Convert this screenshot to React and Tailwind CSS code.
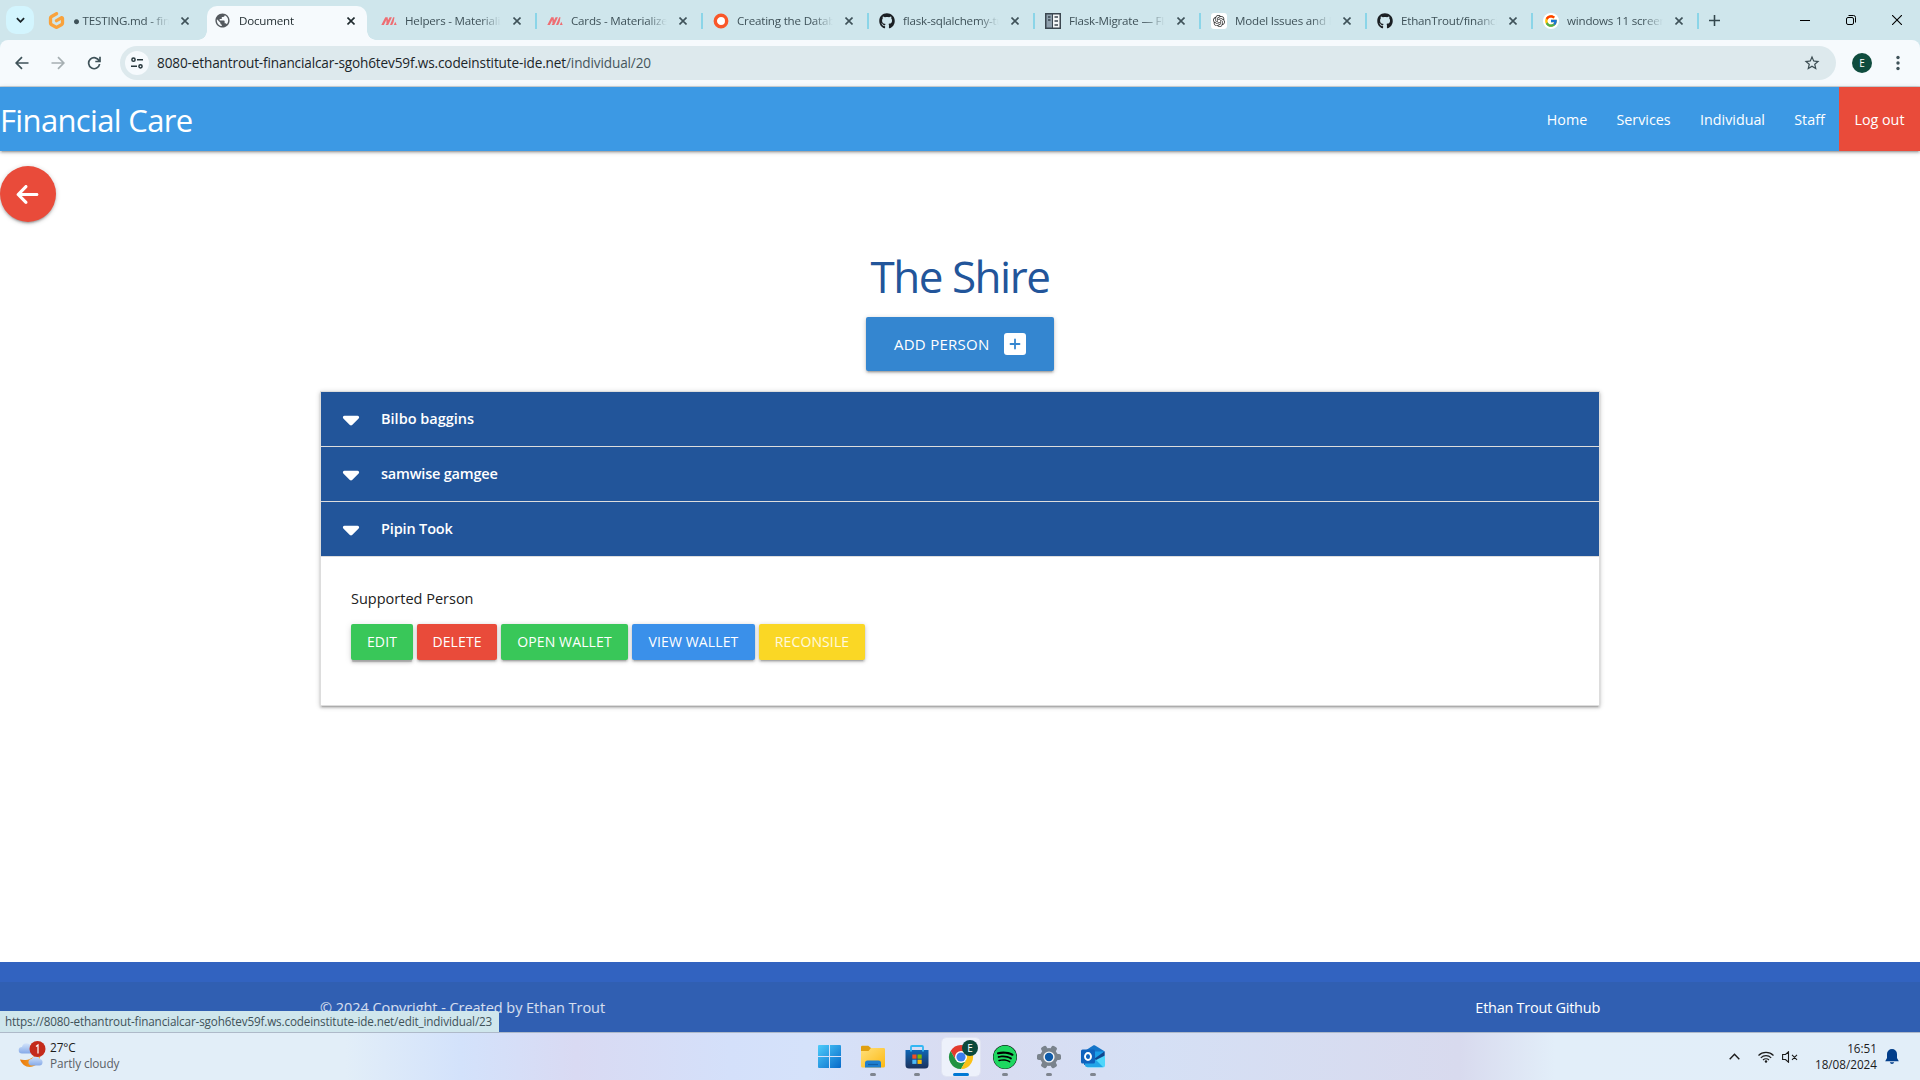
import React from "react";
import { FaGithub, FaSpotify } from "react-icons/fa";
import { FaArrowLeft, FaCaretDown } from "react-icons/fa6";
import { SiGitpod, SiOpenai } from "react-icons/si";
import { FcGoogle } from "react-icons/fc";
import { MdPublic, MdStarBorder } from "react-icons/md";

const SHADOW = "shadow-[0_2px_2px_0_rgba(0,0,0,0.14),0_3px_1px_-2px_rgba(0,0,0,0.12),0_1px_5px_0_rgba(0,0,0,0.2)]";

function MaterializeIcon() {
  return (
    <svg viewBox="0 0 16 16" className="size-4" fill="#ee6e73">
      <path d="M.3 12 4.300 4.200h2.300L2.900 12zM4.600 12l4-7.800h2.300L7.200 12zM5.300 4.200h1.300L7.200 8.500 5.500 12zM9 12l3.200-7.800h1.300L12.600 9 11.200 12zM12.800 12l1.500-3.200 1.400 3.200z" />
    </svg>
  );
}

function RingIcon() {
  return (
    <svg viewBox="0 0 16 16" className="size-4">
      <circle cx="8" cy="8" r="5.700" fill="#fff" stroke="#f9572a" strokeWidth="3.400" />
    </svg>
  );
}

function DocsIcon() {
  return (
    <svg viewBox="0 0 16 16" className="size-4">
      <path d="M0 0h16v16H0z" fill="#3b4750" />
      <path d="M1.500 1.500h5.500v13H1.500z" fill="#8fa0ad" />
      <path d="M8 1.500h6.500v13H8z" fill="#f4f6f7" />
      <path d="M3 4h2.500M3 7h2.500M9.500 4H13M9.500 8H13M9.500 12H13" stroke="#3b4750" strokeWidth="1.600" />
    </svg>
  );
}

const tabs = [
  { title: "● TESTING.md - fin", icon: <SiGitpod className="size-[17px] text-[#f9a23c]" /> },
  { title: "Document", icon: <MdPublic className="size-[17px] text-[#54595e]" />, active: true },
  { title: "Helpers - Materialize", icon: <MaterializeIcon />, line: true },
  { title: "Cards - Materialize", icon: <MaterializeIcon />, line: true },
  { title: "Creating the Database", icon: <RingIcon />, line: true },
  { title: "flask-sqlalchemy-tu", icon: <FaGithub className="size-4 text-[#1b1f23]" />, line: true },
  { title: "Flask-Migrate — Fla", icon: <DocsIcon />, line: true },
  { title: "Model Issues and Fix", icon: <span className="grid size-4 place-items-center rounded-[3px] bg-white"><SiOpenai className="size-3 text-[#333]" /></span>, line: true },
  { title: "EthanTrout/financial", icon: <FaGithub className="size-4 text-[#1b1f23]" />, line: true },
  { title: "windows 11 screens", icon: <span className="grid size-4 place-items-center rounded-full bg-white"><FcGoogle className="size-[14px]" /></span>, line: true },
];

function Tab({ title, icon, active, line }) {
  return (
    <div className={"relative flex h-[34px] w-[166px] shrink-0 items-center " + (active ? "text-[#1f2a2e]" : "text-[#3f5259]")}>
      {active && (
        <div className="absolute inset-y-0 left-[-8px] flex w-[178px] items-end">
          <span className="h-[9px] w-[9px] bg-[radial-gradient(circle_at_0_0,transparent_8.500px,#f6fafd_9px)]" />
          <span className="h-full grow rounded-t-[10px] bg-[#f6fafd]" />
          <span className="h-[9px] w-[9px] bg-[radial-gradient(circle_at_100%_0,transparent_8.500px,#f6fafd_9px)]" />
        </div>
      )}
      <div className="relative flex grow items-center pb-[5px]">
        <span className="ml-[8px] grid size-[17px] place-items-center">{icon}</span>
        <span className="ml-[8px] w-[96px] overflow-hidden whitespace-nowrap text-[11.600px] leading-4 tracking-[-0.200px] [mask-image:linear-gradient(to_right,#000_76px,transparent_96px)]">
          {title}
        </span>
        <svg viewBox="0 0 8 8" className="ml-[12px] size-2" stroke={active ? "#1f2a2e" : "#3f5259"} strokeWidth="1.600">
          <path d="M.5.5l7 7M7.500.5l-7 7" />
        </svg>
      </div>
      {line && <span className="mr-px mb-[5px] h-4 w-[2px] bg-[#8bd5e8]" />}
    </div>
  );
}

function TabStrip() {
  return (
    <div className="flex h-10 bg-[#cfe6ec] pt-[6px]">
      <div className="ml-[6px] grid size-7 shrink-0 place-items-center rounded-[10px] bg-[#d3f5fe]">
        <svg viewBox="0 0 10 6" className="h-[6px] w-[9px]" fill="none" stroke="#1b2529" strokeWidth="2"><path d="M1 1l4 4 4-4" /></svg>
      </div>
      <div className="ml-[6px] flex">{tabs.map((t) => <Tab key={t.title} {...t} />)}</div>
      <svg viewBox="0 0 12 12" className="mt-[9px] ml-[9px] size-[11px]" stroke="#33474d" strokeWidth="1.700"><path d="M6 0v12M0 6h12" /></svg>
      <div className="ml-auto flex h-7 items-center text-black">
        <svg viewBox="0 0 10 10" className="mr-9 size-[10px]" stroke="currentColor"><path d="M0 5.500h10" /></svg>
        <svg viewBox="0 0 10 10" className="mr-9 size-[10px]" fill="none" stroke="currentColor"><rect x=".5" y="2.500" width="7" height="7" rx="1.500" /><path d="M2.500.5H7.500a2 2 0 0 1 2 2V7.500" /></svg>
        <svg viewBox="0 0 10 10" className="mr-[18px] size-[10px]" fill="none" stroke="currentColor" strokeWidth="1.100"><path d="M0 0l10 10M10 0L0 10" /></svg>
      </div>
    </div>
  );
}

function Toolbar() {
  return (
    <div className="bg-[#cfe6ec]">
      <div className="flex h-[47px] items-center rounded-t-[8px] border-b border-[#cdd5d9] bg-[#f6fafd]">
        <svg viewBox="0 0 14 14" className="ml-[15px] size-[14px]" fill="none" stroke="#3f5259" strokeWidth="1.700"><path d="M13.500 7H1.500M7 1.200L1.200 7 7 12.800" /></svg>
        <svg viewBox="0 0 14 14" className="ml-[22px] size-[14px]" fill="none" stroke="#a6afb2" strokeWidth="1.700"><path d="M.5 7h12M7 1.200L12.800 7 7 12.800" /></svg>
        <svg viewBox="0 0 14 14" className="ml-[22px] size-[14px]" fill="none" stroke="#3f5259" strokeWidth="1.700"><path d="M12.200 5A5.500 5.500 0 1 0 12.600 8M13 .8v4.700H8.300" /></svg>
        <div className="ml-[19px] flex h-[34px] w-[1716px] items-center rounded-full bg-[#dde9ed]">
          <span className="ml-[5px] grid size-6 place-items-center rounded-full bg-[#f6fafd]">
            <svg viewBox="0 0 12 12" className="size-3" fill="none" stroke="#26363b" strokeWidth="1.500"><circle cx="2.500" cy="2.700" r="1.600" /><path d="M6 2.700h6M0 9.300h6" /><circle cx="9.500" cy="9.300" r="1.600" /></svg>
          </span>
          <span className="ml-2 text-[13.600px] leading-5 tracking-[-0.140px] text-[#1b2529]">
            8080-ethantrout-financialcar-sgoh6tev59f.ws.codeinstitute-ide.net<span className="text-[#46565c]">/individual/20</span>
          </span>
          <MdStarBorder className="mr-[15px] ml-auto size-[18px] text-[#3a4b51]" />
        </div>
        <span className="ml-4 grid size-5 place-items-center rounded-full bg-[#0f4c3e] text-[10px] leading-none text-white">E</span>
        <svg viewBox="0 0 4 16" className="ml-6 h-4 w-1" fill="#3f5259"><circle cx="2" cy="2.500" r="1.700" /><circle cx="2" cy="8" r="1.700" /><circle cx="2" cy="13.500" r="1.700" /></svg>
      </div>
    </div>
  );
}

const links = [
  ["Home", "w-[70px]"],
  ["Services", "w-[83px]"],
  ["Individual", "w-[95px]"],
  ["Staff", "w-[59px]"],
  ["Log out", "w-[81px] bg-[#e94b3a]"],
];

function Navbar() {
  return (
    <nav className={"relative flex h-16 items-center justify-between bg-[#3c99e4] text-white " + SHADOW}>
      <span className="pt-[3px] text-[31px] tracking-[-0.650px]">Financial Care</span>
      <div className="flex h-full">
        {links.map(([name, cls]) => (
          <a key={name} className={"grid h-full place-items-center pt-px text-[14.300px] " + cls}>{name}</a>
        ))}
      </div>
    </nav>
  );
}

const people = [
  ["Bilbo baggins", "tracking-normal"],
  ["samwise gamgee", "tracking-[-0.200px]"],
  ["Pipin Took", "tracking-[-0.150px]"],
];

const actions = [
  ["Edit", "w-[62px] bg-[#39c759] shadow-[0_3px_3px_0_rgba(0,0,0,0.14),0_1px_7px_0_rgba(0,0,0,0.12),0_3px_1px_-1px_rgba(0,0,0,0.2)]"],
  ["Delete", "w-[80px] bg-[#e94b3a] " + SHADOW],
  ["Open Wallet", "w-[127px] bg-[#39c759] " + SHADOW],
  ["View Wallet", "w-[123px] bg-[#3a90ea] " + SHADOW],
  ["Reconsile", "w-[106px] bg-[#fad725] text-white/85 " + SHADOW],
];

function Main() {
  return (
    <main className="flex h-[811px] flex-col items-center bg-white">
      <a className={"mt-[15px] flex size-14 items-center self-start rounded-full bg-[#e94b3a] pl-[15px] text-white " + SHADOW}>
        <FaArrowLeft className="size-[25px]" />
      </a>
      <h1 className="mt-6 h-[71px] text-[44px] leading-[60px] tracking-[-1.500px] text-[#22559a]">The Shire</h1>
      <a className={"flex h-[54px] w-[188px] items-center rounded-[2px] bg-[#3486d0] pl-7 text-white " + SHADOW}>
        <span className="text-[15px] tracking-[0.250px] uppercase">Add Person</span>
        <svg viewBox="0 0 22 22" className="ml-[15px] size-[22px]">
          <rect width="22" height="22" rx="3" fill="#fff" />
          <path d="M11 6.500v9M6.500 11h9" stroke="#3486d0" strokeWidth="1.800" strokeLinecap="round" />
        </svg>
      </a>
      <div className={"mt-5 h-[315px] w-[1280px] border border-[#ddd] " + SHADOW}>
        {people.map(([name, cls]) => (
          <div key={name} className="flex h-[55px] items-center border-b border-[#ddd] bg-[#22559a] text-white">
            <FaCaretDown className="ml-[17px] size-[26px]" />
            <span className={"ml-[17px] pb-px text-[14.500px] font-semibold " + cls}>{name}</span>
          </div>
        ))}
        <div className="px-[30px] pt-[30px] text-[#212121]">
          <p className="text-[14.500px] leading-[23px]">Supported Person</p>
          <div className="mt-[14px] flex gap-1">
            {actions.map(([name, cls]) => (
              <a key={name} className={"grid h-9 place-items-center rounded-[2px] pb-px text-[14px] tracking-[0.120px] text-white uppercase " + cls}>{name}</a>
            ))}
          </div>
        </div>
      </div>
    </main>
  );
}

function Footer() {
  return (
    <footer className="relative h-[70px] bg-[#3263c0] pt-5">
      <div className="flex h-[50px] items-center justify-center bg-[#305fb2]">
        <div className="flex w-[1280px] justify-between pt-px text-[14.500px]">
          <span className="tracking-[-0.050px] text-white/80">© 2024 Copyright - Created by Ethan Trout</span>
          <a className="tracking-[-0.260px] text-white">Ethan Trout Github</a>
        </div>
      </div>
      <div className="absolute bottom-0 left-0 flex h-[21px] w-[499px] items-center rounded-tr-[2px] bg-[#cfe6ec] pl-[5px] text-[11.700px] tracking-[-0.140px] whitespace-nowrap text-[#3f5259]">
        https://8080-ethantrout-financialcar-sgoh6tev59f.ws.codeinstitute-ide.net/edit_individual/23
      </div>
    </footer>
  );
}

function Weather() {
  return (
    <svg viewBox="0 0 28 30" className="h-[30px] w-7">
      <defs>
        <linearGradient id="cloud" x1="0" y1="0" x2="0" y2="1"><stop offset="0" stopColor="#d3e4fb" /><stop offset="1" stopColor="#86aae8" /></linearGradient>
        <linearGradient id="moon" x1="0" y1="0" x2="1" y2="0"><stop offset="0" stopColor="#e8780c" /><stop offset="1" stopColor="#fbb034" /></linearGradient>
      </defs>
      <path d="M4 14.500a3.300 3.300 0 0 1 0-6.600 4.800 4.800 0 0 1 9-1v7.600z" fill="url(#cloud)" />
      <path d="M2 20.500c6 1.500 13-.5 15-5h5c1 7-4 12.500-10.500 12.500-4 0-8-3-9.500-7.500z" fill="url(#moon)" />
      <path d="M13 26.500a3.300 3.300 0 0 1 .5-6.500 4.700 4.700 0 0 1 8.500 0 3.300 3.300 0 0 1-.5 6.500z" fill="url(#cloud)" />
      <circle cx="19.500" cy="10" r="8" fill="#c42b1c" />
      <path d="M18 7.500l2-1.500v8.500" fill="none" stroke="#fff" strokeWidth="1.200" />
    </svg>
  );
}

function WindowsIcon() {
  return (
    <svg viewBox="0 0 23 23" className="size-[23px]">
      <defs><linearGradient id="win" x1="0" y1="0" x2="1" y2="1"><stop offset="0" stopColor="#4dccfb" /><stop offset="1" stopColor="#0669c9" /></linearGradient></defs>
      <path d="M0 1a1 1 0 0 1 1-1h10v11H0zM12 0h10a1 1 0 0 1 1 1v10H12zM0 12h11v11H1a1 1 0 0 1-1-1zM12 12h11v10a1 1 0 0 1-1 1H12z" fill="url(#win)" />
    </svg>
  );
}

function FolderIcon() {
  return (
    <svg viewBox="0 0 24 24" className="size-6">
      <defs><linearGradient id="fold" x1="0" y1="0" x2="1" y2="1"><stop offset="0" stopColor="#ffe07a" /><stop offset="1" stopColor="#fdb913" /></linearGradient></defs>
      <path d="M0 2a1.300 1.300 0 0 1 1.300-1.300h6L10 3v5H0z" fill="#e09f10" />
      <path d="M0 6h7.500L10 3h12.700A1.300 1.300 0 0 1 24 4.300V21a1.500 1.500 0 0 1-1.500 1.500h-21A1.500 1.500 0 0 1 0 21z" fill="url(#fold)" />
      <path d="M4 22.500V18a2.500 2.500 0 0 1 2.500-2.500h11A2.500 2.500 0 0 1 20 18v4.500z" fill="#1f7fcf" />
      <path d="M7 19.500h10" stroke="#135fa5" strokeWidth="1.200" />
    </svg>
  );
}

function StoreIcon() {
  return (
    <svg viewBox="0 0 24 24" className="size-6">
      <defs><linearGradient id="store" x1="0" y1="0" x2="0" y2="1"><stop offset="0" stopColor="#0f66b5" /><stop offset="1" stopColor="#1b315c" /></linearGradient></defs>
      <path d="M.5 5h23v15a3.500 3.500 0 0 1-3.500 3.500H4A3.500 3.500 0 0 1 .5 20z" fill="url(#store)" />
      <path d="M6 6.500V2a1 1 0 0 1 1-1h10a1 1 0 0 1 1 1v4.500" fill="none" stroke="#33b7f3" strokeWidth="1.800" />
      <path d="M7.300 9.500h4.200v4.200H7.300z" fill="#f25022" /><path d="M12.500 9.500h4.200v4.200h-4.200z" fill="#7fba00" />
      <path d="M7.300 14.700h4.200v4.200H7.300z" fill="#4cb8f5" /><path d="M12.500 14.700h4.200v4.200h-4.200z" fill="#ffb900" />
    </svg>
  );
}

function ChromeIcon() {
  return (
    <svg viewBox="0 0 38 34" className="h-[34px] w-[38px]">
      <path d="M8.600 13A12 12 0 0 1 29.400 13H19L13.800 22z" fill="#e33b2e" />
      <path d="M8.600 13A12 12 0 0 0 19 31L24.200 22H13.800z" fill="#229342" />
      <path d="M29.400 13A12 12 0 0 1 19 31L24.200 22 19 13z" fill="#fbc116" />
      <circle cx="19" cy="19" r="6" fill="#fff" /><circle cx="19" cy="19" r="4.600" fill="#3b7ded" />
      <circle cx="28" cy="10" r="8" fill="#0b4a3c" />
      <text x="28" y="13.500" textAnchor="middle" fontSize="10" fill="#fff">E</text>
    </svg>
  );
}

function GearIcon() {
  return (
    <svg viewBox="0 0 24 24" className="size-6">
      <g fill="#7a838c">
        <circle cx="12" cy="12" r="9" />
        {["rotate(0 12 12)", "rotate(60 12 12)", "rotate(120 12 12)"].map((r) => (
          <rect key={r} x="0" y="9" width="24" height="6" rx="1.800" transform={r} />
        ))}
      </g>
      <circle cx="12" cy="12" r="5.600" fill="#f3f5f8" /><circle cx="12" cy="12" r="4.200" fill="#0f5ba8" />
    </svg>
  );
}

function OutlookIcon() {
  return (
    <svg viewBox="0 0 24 24" className="size-6">
      <path d="M3 6.500L12.500.3a1.200 1.200 0 0 1 1.200 0L23.500 6.200V20H3z" fill="#1475c9" />
      <path d="M10 6.500h13.500L14 13z" fill="#1a9de8" />
      <path d="M12 15l11.500-8.500v5L14 17z" fill="#12468c" />
      <path d="M4 20.500L24 10.500V20a2.500 2.500 0 0 1-2.500 2.500H6.500z" fill="#4fd6fb" />
      <path d="M4 14h10l8 8H6a2 2 0 0 1-2-2z" fill="#23a5e8" />
      <rect x="0" y="4.500" width="14" height="14" rx="1.500" fill="#0f62bd" />
      <ellipse cx="7" cy="11.500" rx="3" ry="3.500" fill="none" stroke="#fff" strokeWidth="1.900" />
    </svg>
  );
}

const apps = [
  { id: "start", icon: <WindowsIcon /> },
  { id: "files", icon: <FolderIcon />, open: true },
  { id: "store", icon: <StoreIcon />, open: true },
  { id: "chrome", icon: <ChromeIcon />, current: true },
  { id: "spotify", icon: <FaSpotify className="size-6 rounded-full bg-black text-[#1ed760]" />, open: true },
  { id: "settings", icon: <GearIcon />, open: true },
  { id: "outlook", icon: <OutlookIcon />, open: true },
];

function Taskbar() {
  return (
    <div className="flex h-12 items-start justify-between border-t border-[#aeb9c9] bg-[linear-gradient(to_right,#e2eef8_0%,#e2eef8_18%,#d3e2fb_24%,#d9daf3_30%,#d4e0fa_38%,#d5e2fa_42%,#d9dcf1_50%,#d5e0f5_60%,#d8daee_76%,#e2eef9_81%,#e2eef8_100%)]">
      <div className="flex w-[400px] pt-[6px] pl-[18px]">
        <Weather />
        <div className="ml-[4px] text-[11.800px] leading-4 tracking-[-0.100px] text-[#1b1b1b]">
          <p>27°C</p>
          <p className="text-[#5a5f66]">Partly cloudy</p>
        </div>
      </div>
      <div className="mt-[5px] ml-[2px] flex gap-[6px]">
        {apps.map((a) => (
          <div key={a.id} className={"flex h-[38px] w-[38px] flex-col items-center justify-between rounded " + (a.current ? "bg-[#edf1fb] outline outline-[#e0e4f2]" : "pt-[7px]")}>
            {a.icon}
            {a.open && <span className="h-[3px] w-[6px] rounded-full bg-[#7f858f]" />}
            {a.current && <span className="h-[3px] w-4 rounded-full bg-[#0078d4]" />}
          </div>
        ))}
      </div>
      <div className="flex h-full w-[400px] items-center justify-end pr-[21px] text-[#1b1b1b]">
        <svg viewBox="0 0 11 7" className="mr-[18px] h-[7px] w-[11px]" fill="none" stroke="currentColor" strokeWidth="1.400"><path d="M.7 6.200L5.500 1.200l4.800 5" /></svg>
        <svg viewBox="0 0 16 12" className="mr-2 h-3 w-4" fill="none" stroke="currentColor" strokeWidth="1.100"><path d="M.5 4.500a10.500 10.500 0 0 1 15 0M2.800 6.800a7.300 7.300 0 0 1 10.400 0M5 9a4.200 4.200 0 0 1 6 0" /><circle cx="8" cy="10.500" r="1.200" fill="currentColor" stroke="none" /></svg>
        <svg viewBox="0 0 16 12" className="mr-[17px] h-3 w-4" fill="none" stroke="currentColor" strokeWidth="1.100"><path d="M6.500.8v10.400L3.500 8.500H.6v-5h2.900zM10 3.800l5 5M15 3.800l-5 5" /></svg>
        <div className="pb-px text-right text-[11.700px] leading-4">
          <p>16:51</p>
          <p>18/08/2024</p>
        </div>
        <svg viewBox="0 0 14 16" className="ml-2 h-4 w-[14px]" fill="#023e8a"><path d="M7 0a5 5 0 0 1 5 5v4l1.800 3.200H.2L2 9V5a5 5 0 0 1 5-5zM4.800 13.300h4.400a2.300 2.300 0 0 1-4.400 0z" /></svg>
      </div>
    </div>
  );
}

export default function App() {
  return (
    <div className="h-[1080px] w-[1920px] overflow-hidden bg-white font-['Open_Sans','Noto_Sans',sans-serif]">
      <TabStrip />
      <Toolbar />
      <Navbar />
      <Main />
      <Footer />
      <Taskbar />
    </div>
  );
}
